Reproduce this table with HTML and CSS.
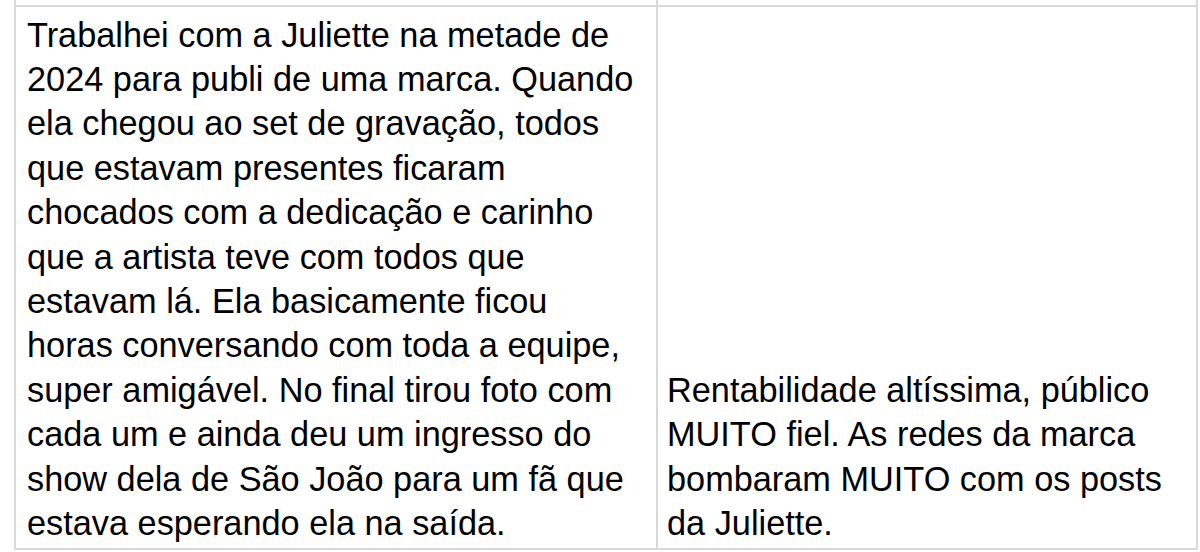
FILE: index.html
```html
<!DOCTYPE html>
<html lang="pt-BR">
<head>
<meta charset="utf-8">
<title>Tabela</title>
<link rel="stylesheet" href="styles.css">
</head>
<body>
<table class="sheet">
  <tr class="prev-row">
    <td class="col-a"></td>
    <td class="col-b"></td>
  </tr>
  <tr class="row">
    <td class="cell col-a">Trabalhei com a Juliette na metade de<br>2024 para publi de uma marca. Quando<br>ela chegou ao set de gravação, todos<br>que estavam presentes ficaram<br>chocados com a dedicação e carinho<br>que a artista teve com todos que<br>estavam lá. Ela basicamente ficou<br>horas conversando com toda a equipe,<br>super amigável. No final tirou foto com<br>cada um e ainda deu um ingresso do<br>show dela de São João para um fã que<br>estava esperando ela na saída.</td>
    <td class="cell col-b">Rentabilidade altíssima, público<br>MUITO fiel. As redes da marca<br>bombaram MUITO com os posts<br>da Juliette.</td>
  </tr>
</table>
</body>
</html>
```
FILE: styles.css
```css
html, body {
  margin: 0;
  padding: 0;
  background: #ffffff;
}
body {
  width: 1200px;
  height: 552px;
  overflow: hidden;
}
.sheet {
  border-collapse: collapse;
  margin-left: 14px;
  width: 1184px;
  table-layout: fixed;
  font-family: "Liberation Sans", Arial, sans-serif;
  color: #000000;
}
.sheet td {
  border: 2px solid #d9d9d9;
  padding: 0;
}
.prev-row td {
  border-top: none;
  height: 5px;
}
.col-a {
  width: 640px;
}
.cell {
  font-size: 34.3px;
  line-height: 44.4px;
  padding: 5.5px 10px 3px 11px !important;
  white-space: nowrap;
}
.cell.col-a {
  vertical-align: top;
}
.cell.col-b {
  vertical-align: bottom;
  padding-left: 9px !important;
}
```
